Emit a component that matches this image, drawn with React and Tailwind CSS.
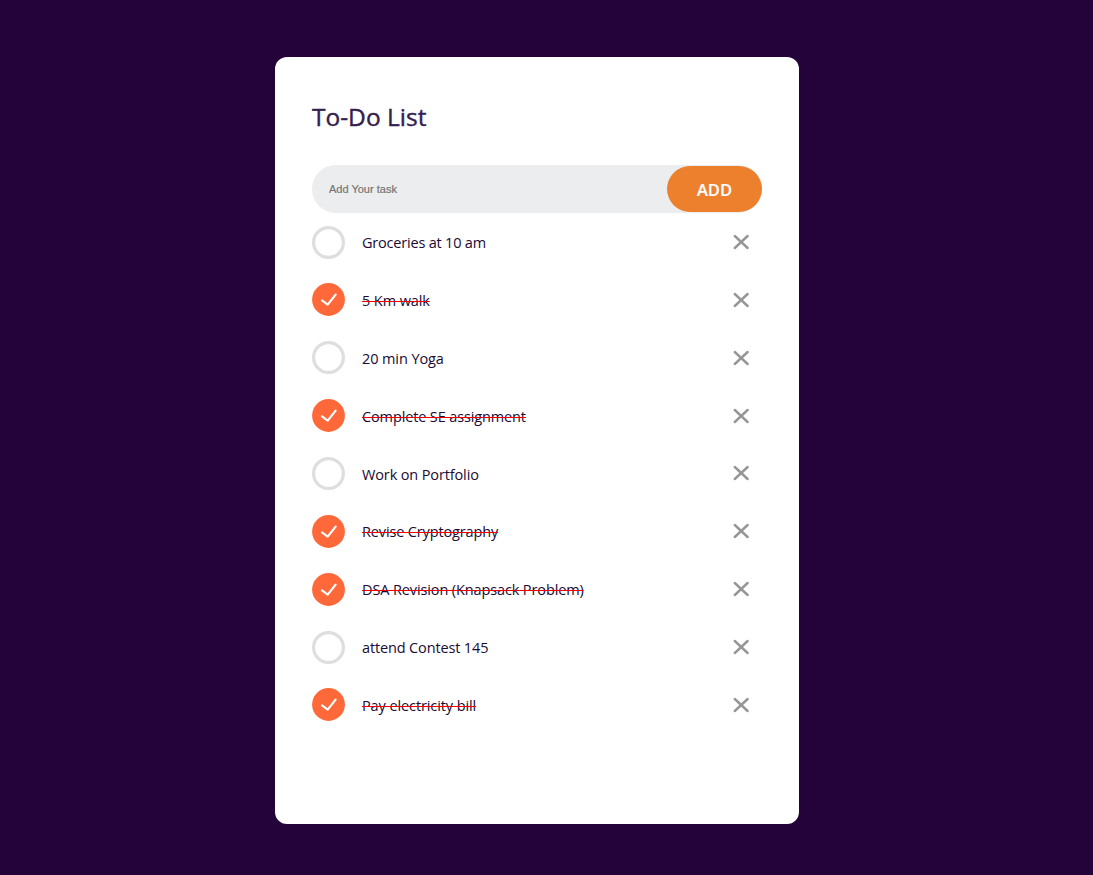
import { useState } from "react";

const initialTasks = [
  { text: "Groceries at 10 am", done: false, tracking: "tracking-[-0.2px]" },
  { text: "5 Km walk", done: true, tracking: "tracking-[-0.1px]" },
  { text: "20 min Yoga", done: false, tracking: "tracking-[-0.1px]" },
  { text: "Complete SE assignment", done: true, tracking: "tracking-[-0.13px]" },
  { text: "Work on Portfolio", done: false, tracking: "tracking-[-0.13px]" },
  { text: "Revise Cryptography", done: true, tracking: "tracking-[-0.14px]" },
  { text: "DSA Revision (Knapsack Problem)", done: true, tracking: "tracking-[-0.12px]" },
  { text: "attend Contest 145", done: false, tracking: "tracking-[-0.14px]" },
  { text: "Pay electricity bill", done: true, tracking: "tracking-[-0.1px]" },
];

function StatusIcon({ done }) {
  return (
    <svg className="h-[33px] w-[33px] shrink-0" viewBox="0 0 33 33" fill="none">
      {done ? (
        <>
          <circle cx="16.5" cy="16.5" r="16.4" fill="#ff6839" />
          <path d="M10 17.4 15.7 21.6 23.6 11.6" stroke="#fff" strokeWidth="2.2" strokeLinecap="round" strokeLinejoin="round" />
        </>
      ) : (
        <circle cx="16.5" cy="16.5" r="14.9" stroke="#dedede" strokeWidth="3.2" />
      )}
    </svg>
  );
}

function Task({ task, onToggle, onDelete }) {
  return (
    <li className="flex h-[57.87px] items-center">
      <button type="button" onClick={onToggle} className="flex flex-1 items-center text-left">
        <StatusIcon done={task.done} />
        <span
          className={`ml-[17px] mt-[2.2px] whitespace-nowrap text-[14.5px] leading-5 text-[#200a33] ${task.tracking} ${
            task.done ? "line-through decoration-[#f00000] decoration-1" : ""
          }`}
        >
          {task.text}
        </span>
      </button>
      <button type="button" onClick={onDelete} aria-label="Delete" className="mr-[13px]">
        <svg className="block h-4 w-4" viewBox="0 0 16 16" fill="none">
          <path d="M1.8 2 14.6 14M14.6 2 1.8 14" stroke="#969696" strokeWidth="2.4" strokeLinecap="round" />
        </svg>
      </button>
    </li>
  );
}

export default function App() {
  const [tasks, setTasks] = useState(initialTasks);
  const [value, setValue] = useState("");

  const add = () => {
    if (!value.trim()) return;
    setTasks([...tasks, { text: value.trim(), done: false, tracking: "tracking-normal" }]);
    setValue("");
  };

  return (
    <main className="h-[875px] bg-[#24023a] pl-[275px] pt-[57px] font-['Open_Sans','Noto_Sans',sans-serif]">
      <section className="h-[767px] w-[524px] rounded-xl bg-white px-[37px] pt-[42px]">
        <h1 className="h-9 text-[24.5px] font-normal leading-9 text-[#34204f] [-webkit-text-stroke:0.4px_#34204f]">To-Do List</h1>
        <div className="mt-[30px] flex h-12 w-[450px] items-center rounded-full bg-[#ecedef]">
          <input
            value={value}
            onChange={(e) => setValue(e.target.value)}
            placeholder="Add Your task"
            className="h-full min-w-0 flex-1 bg-transparent pl-[17px] font-['Liberation_Sans',sans-serif] text-[11px] outline-none [-webkit-text-stroke:0.2px_#757575] placeholder:text-[#757575]"
          />
          <button
            type="button"
            onClick={add}
            className="h-[46px] w-[95px] rounded-full bg-[#ed802d] pt-0.5 text-[16.5px] font-semibold text-white [-webkit-text-stroke:0.2px_#fff]"
          >
            ADD
          </button>
        </div>
        <ul className="pt-[0.1px]">
          {tasks.map((task, i) => (
            <Task
              key={i}
              task={task}
              onToggle={() => setTasks(tasks.map((t, j) => (j === i ? { ...t, done: !t.done } : t)))}
              onDelete={() => setTasks(tasks.filter((_, j) => j !== i))}
            />
          ))}
        </ul>
      </section>
    </main>
  );
}
